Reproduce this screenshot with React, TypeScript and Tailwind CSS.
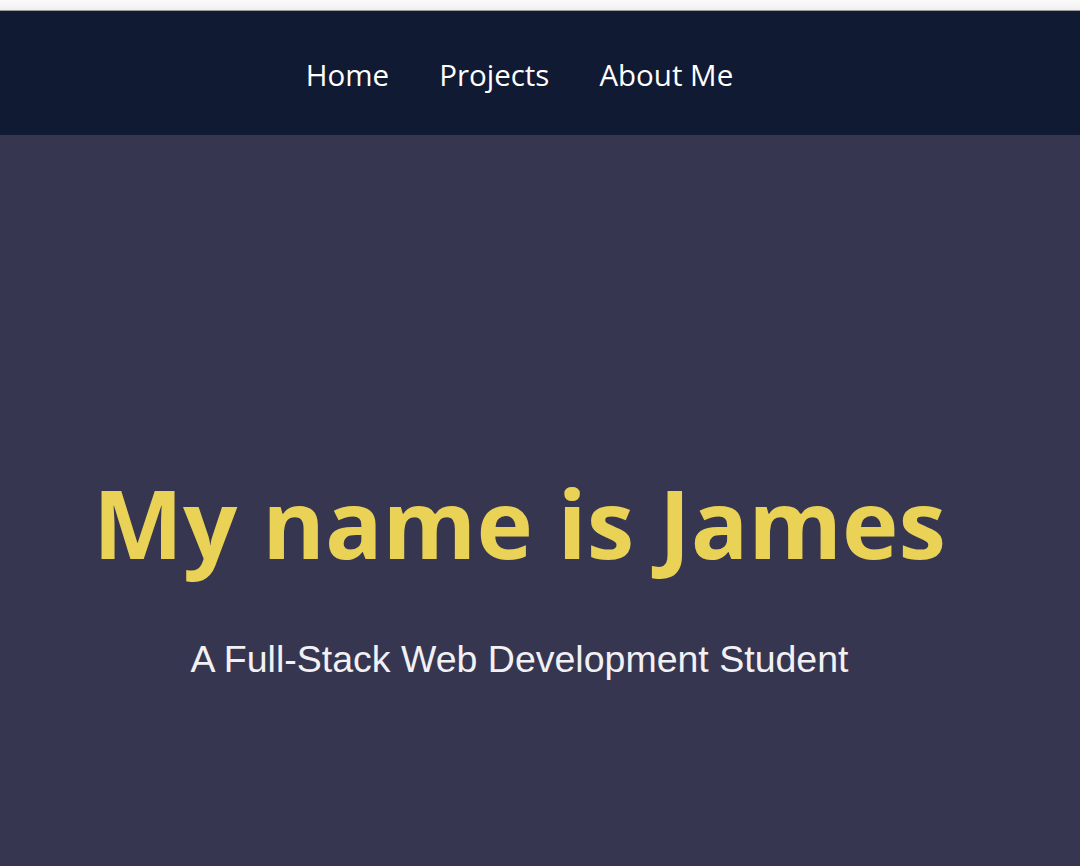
import React from 'react';

const links = ['Home', 'Projects', 'About Me'];

export default function App() {
  return (
    <div className="min-h-[866px] w-full bg-[#373651] flex flex-col">
      {/* browser chrome strip */}
      <div className="h-[11px] bg-gradient-to-b from-[#fbfbfb] to-[#efefef] border-b border-[#9a9a9a]" />

      <header className="bg-[#111a33] h-[124px] flex items-center">
        <nav className="w-[1039px] flex justify-center gap-[50px] pt-[3px]">
          {links.map((l) => (
            <a
              key={l}
              href="#"
              className="text-white text-[29.5px] leading-none"
              style={{ fontFamily: '"Open Sans", sans-serif' }}
            >
              {l}
            </a>
          ))}
        </nav>
      </header>

      <main className="w-[1039px] flex flex-col items-center pt-[340px]">
        <h1
          className="text-[#e9d256] text-[95.5px] font-bold leading-none"
          style={{ fontFamily: '"Open Sans", sans-serif' }}
        >
          My name is James
        </h1>
        <p
          className="mt-[70px] text-[#f1f1f5] text-[37.5px] leading-none"
          style={{ fontFamily: '"Liberation Sans", Arial, sans-serif' }}
        >
          A Full-Stack Web Development Student
        </p>
      </main>
    </div>
  );
}
